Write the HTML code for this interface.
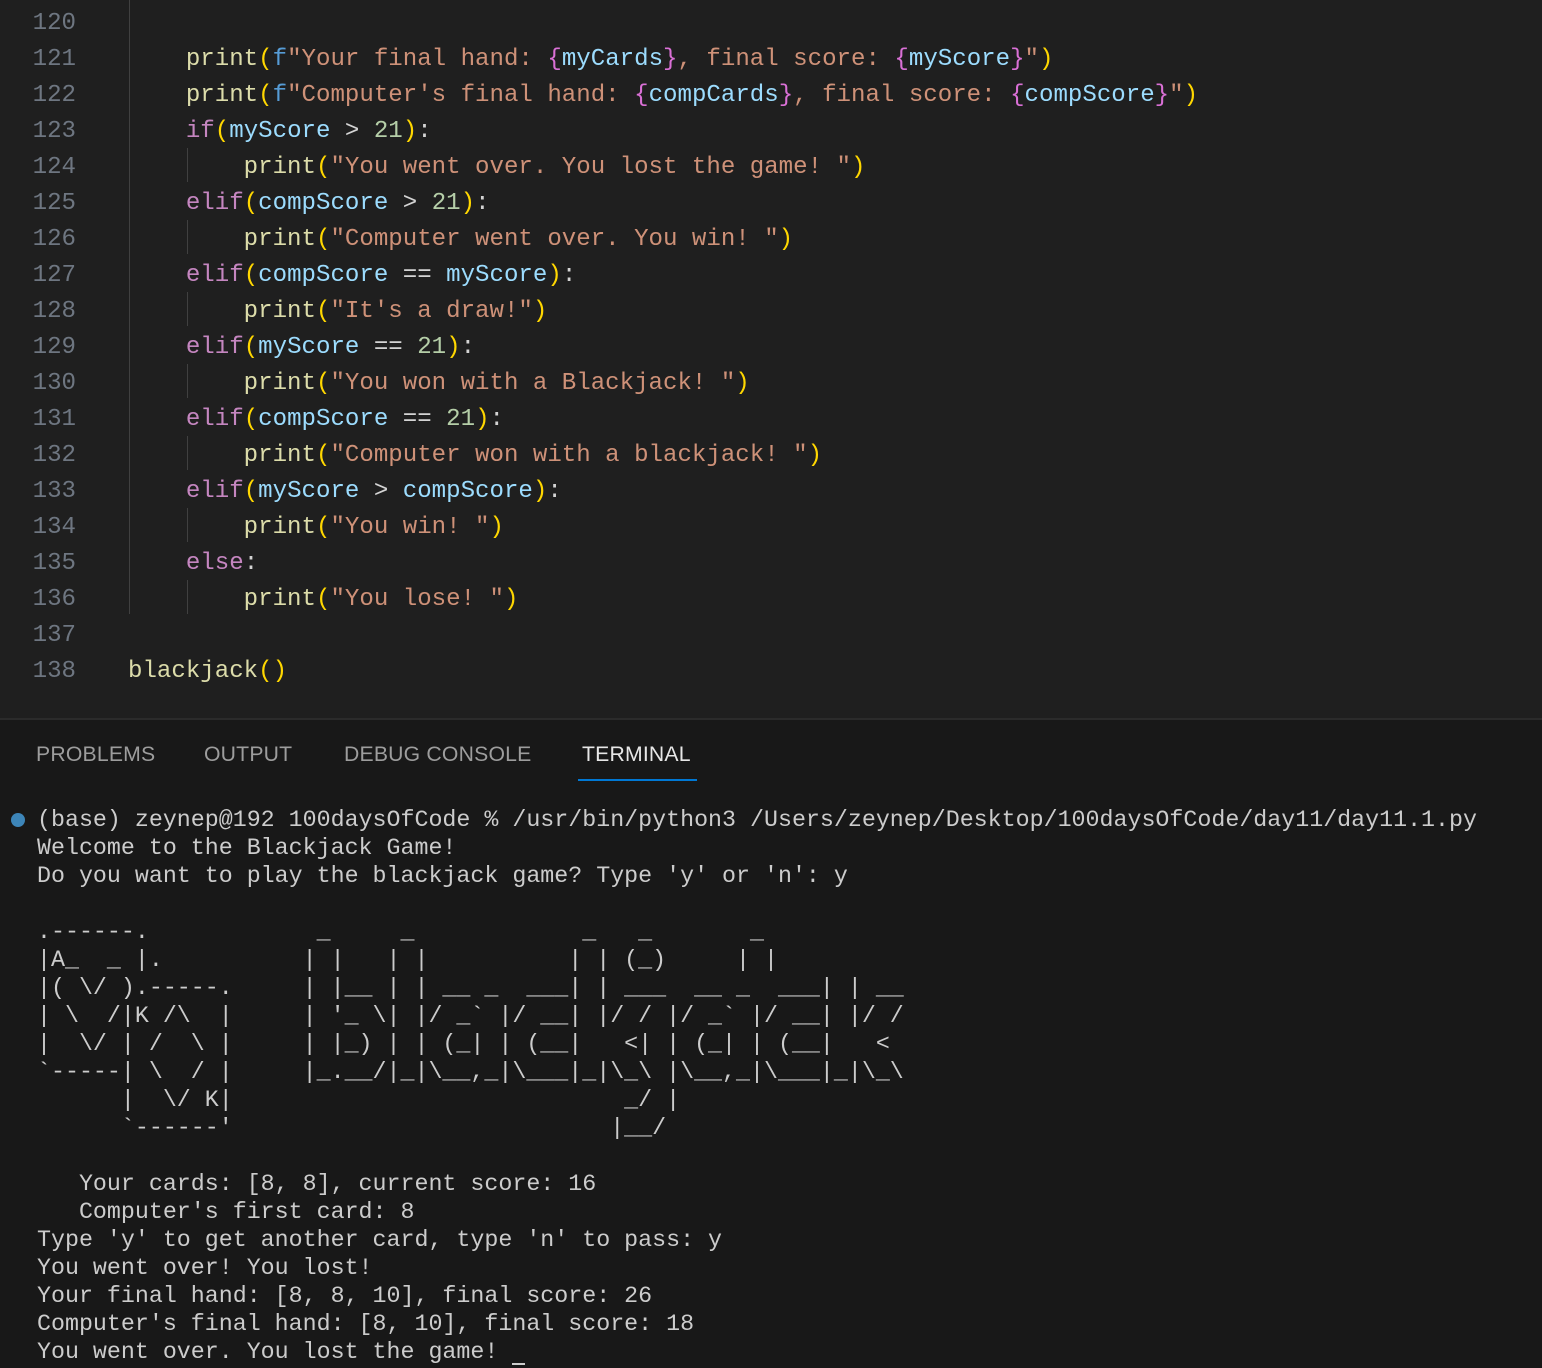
<!DOCTYPE html>
<html><head><meta charset="utf-8"><style>
body{margin:0;width:1542px;height:1368px;background:#181818;overflow:hidden;position:relative;font-family:"Liberation Mono",monospace}
#ed{position:absolute;left:0;top:0;width:1542px;height:718px;background:#1f1f1f;border-bottom:2px solid #2b2b2b}
.ln{position:absolute;left:0;width:76px;text-align:right;color:#6e7681;font-size:24.1px;line-height:36px;height:36px}
.cd{position:absolute;left:128px;font-size:24.1px;line-height:36px;height:36px;white-space:pre;color:#d4d4d4}
.g{position:absolute;width:1px;background:#404040}
.fn{color:#dcdcaa}.s{color:#ce9178}.p{color:#ffd700}.b{color:#da70d6}.v{color:#9cdcfe}.k{color:#c586c0}.n{color:#b5cea8}.f{color:#569cd6}
.tab{position:absolute;top:743px;font-family:"Liberation Sans",sans-serif;font-size:21.2px;color:#9d9d9d;letter-spacing:0.2px}
#term{position:absolute;left:37px;top:806px;font-size:23.3px;line-height:28px;white-space:pre;color:#cccccc}
</style></head><body>
<div id="ed">
<div class="g" style="left:129px;top:0;height:614px"></div>
<div class="g" style="left:187px;top:148px;height:34px"></div>
<div class="g" style="left:187px;top:220px;height:34px"></div>
<div class="g" style="left:187px;top:292px;height:34px"></div>
<div class="g" style="left:187px;top:364px;height:34px"></div>
<div class="g" style="left:187px;top:436px;height:34px"></div>
<div class="g" style="left:187px;top:508px;height:34px"></div>
<div class="g" style="left:187px;top:580px;height:34px"></div>
<div class="ln" style="top:6px">120</div>
<div class="ln" style="top:42px">121</div>
<div class="ln" style="top:78px">122</div>
<div class="ln" style="top:114px">123</div>
<div class="ln" style="top:150px">124</div>
<div class="ln" style="top:186px">125</div>
<div class="ln" style="top:222px">126</div>
<div class="ln" style="top:258px">127</div>
<div class="ln" style="top:294px">128</div>
<div class="ln" style="top:330px">129</div>
<div class="ln" style="top:366px">130</div>
<div class="ln" style="top:402px">131</div>
<div class="ln" style="top:438px">132</div>
<div class="ln" style="top:474px">133</div>
<div class="ln" style="top:510px">134</div>
<div class="ln" style="top:546px">135</div>
<div class="ln" style="top:582px">136</div>
<div class="ln" style="top:618px">137</div>
<div class="ln" style="top:654px">138</div>
<div class="cd" style="top:42px">    <span class="fn">print</span><span class="p">(</span><span class="f">f</span><span class="s">"Your final hand: </span><span class="b">{</span><span class="v">myCards</span><span class="b">}</span><span class="s">, final score: </span><span class="b">{</span><span class="v">myScore</span><span class="b">}</span><span class="s">"</span><span class="p">)</span></div>
<div class="cd" style="top:78px">    <span class="fn">print</span><span class="p">(</span><span class="f">f</span><span class="s">"Computer's final hand: </span><span class="b">{</span><span class="v">compCards</span><span class="b">}</span><span class="s">, final score: </span><span class="b">{</span><span class="v">compScore</span><span class="b">}</span><span class="s">"</span><span class="p">)</span></div>
<div class="cd" style="top:114px">    <span class="k">if</span><span class="p">(</span><span class="v">myScore</span> &gt; <span class="n">21</span><span class="p">)</span>:</div>
<div class="cd" style="top:150px">        <span class="fn">print</span><span class="p">(</span><span class="s">"You went over. You lost the game! "</span><span class="p">)</span></div>
<div class="cd" style="top:186px">    <span class="k">elif</span><span class="p">(</span><span class="v">compScore</span> &gt; <span class="n">21</span><span class="p">)</span>:</div>
<div class="cd" style="top:222px">        <span class="fn">print</span><span class="p">(</span><span class="s">"Computer went over. You win! "</span><span class="p">)</span></div>
<div class="cd" style="top:258px">    <span class="k">elif</span><span class="p">(</span><span class="v">compScore</span> == <span class="v">myScore</span><span class="p">)</span>:</div>
<div class="cd" style="top:294px">        <span class="fn">print</span><span class="p">(</span><span class="s">"It's a draw!"</span><span class="p">)</span></div>
<div class="cd" style="top:330px">    <span class="k">elif</span><span class="p">(</span><span class="v">myScore</span> == <span class="n">21</span><span class="p">)</span>:</div>
<div class="cd" style="top:366px">        <span class="fn">print</span><span class="p">(</span><span class="s">"You won with a Blackjack! "</span><span class="p">)</span></div>
<div class="cd" style="top:402px">    <span class="k">elif</span><span class="p">(</span><span class="v">compScore</span> == <span class="n">21</span><span class="p">)</span>:</div>
<div class="cd" style="top:438px">        <span class="fn">print</span><span class="p">(</span><span class="s">"Computer won with a blackjack! "</span><span class="p">)</span></div>
<div class="cd" style="top:474px">    <span class="k">elif</span><span class="p">(</span><span class="v">myScore</span> &gt; <span class="v">compScore</span><span class="p">)</span>:</div>
<div class="cd" style="top:510px">        <span class="fn">print</span><span class="p">(</span><span class="s">"You win! "</span><span class="p">)</span></div>
<div class="cd" style="top:546px">    <span class="k">else</span>:</div>
<div class="cd" style="top:582px">        <span class="fn">print</span><span class="p">(</span><span class="s">"You lose! "</span><span class="p">)</span></div>
<div class="cd" style="top:654px"><span class="fn">blackjack</span><span class="p">()</span></div>
</div>
<div class="tab" style="left:36px">PROBLEMS</div>
<div class="tab" style="left:204px">OUTPUT</div>
<div class="tab" style="left:344px">DEBUG CONSOLE</div>
<div class="tab" style="left:582px;color:#e7e7e7">TERMINAL</div>
<div style="position:absolute;left:578px;top:779px;width:119px;height:2px;background:#0078d4"></div>
<div style="position:absolute;left:11px;top:813px;width:14px;height:14px;border-radius:50%;background:#3d85b8"></div>
<div id="term">(base) zeynep@192 100daysOfCode % /usr/bin/python3 /Users/zeynep/Desktop/100daysOfCode/day11/day11.1.py
Welcome to the Blackjack Game!
Do you want to play the blackjack game? Type 'y' or 'n': y

.------.            _     _            _   _       _    
|A_  _ |.          | |   | |          | | (_)     | |   
|( \/ ).-----.     | |__ | | __ _  ___| | ___  __ _  ___| | __
| \  /|K /\  |     | '_ \| |/ _` |/ __| |/ / |/ _` |/ __| |/ /
|  \/ | /  \ |     | |_) | | (_| | (__|   &lt;| | (_| | (__|   &lt; 
`-----| \  / |     |_.__/|_|\__,_|\___|_|\_\ |\__,_|\___|_|\_\
      |  \/ K|                            _/ |                
      `------'                           |__/           

   Your cards: [8, 8], current score: 16
   Computer's first card: 8
Type 'y' to get another card, type 'n' to pass: y
You went over! You lost!
Your final hand: [8, 8, 10], final score: 26
Computer's final hand: [8, 10], final score: 18
You went over. You lost the game! <span style="display:inline-block;width:13px;height:2px;background:#ccc;vertical-align:-7px"></span></div>
</body></html>
